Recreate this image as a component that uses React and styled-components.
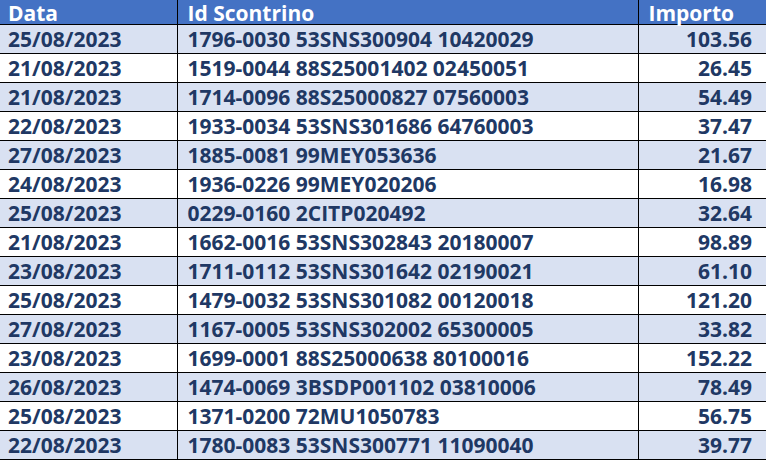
import styled, { createGlobalStyle } from "styled-components";

const GlobalStyle = createGlobalStyle`
  html, body {
    margin: 0;
    padding: 0;
    background: #ffffff;
    overflow: hidden;
  }
`;

const Table = styled.table`
  width: 766px;
  border-collapse: collapse;
  table-layout: fixed;
  font-family: "Open Sans", Lato, sans-serif;
  font-weight: 700;
  font-size: 21px;
`;

const HeadCell = styled.th`
  background: #4472c4;
  color: #ffffff;
  height: 24px;
  box-sizing: border-box;
  padding: 3px ${(props) => (props.$first ? "8px" : "10px")} 1px;
  text-align: left;
  vertical-align: bottom;
  line-height: 20px;
  font-weight: 700;
  border-bottom: 1px solid #000;
  border-left: ${(props) => (props.$first ? "none" : "1px solid #000")};
`;

const Row = styled.tr`
  background: ${(props) => (props.$shaded ? "#d9e1f2" : "#ffffff")};
`;

const Cell = styled.td`
  color: #203864;
  height: 28px;
  padding: 0 ${(props) => (props.$right ? "14px" : props.$first ? "8px" : "10px")};
  text-align: ${(props) => (props.$right ? "right" : "left")};
  vertical-align: bottom;
  line-height: 28px;
  white-space: nowrap;
  border-bottom: 1px solid #000;
  border-left: ${(props) => (props.$first ? "none" : "1px solid #000")};
`;

const rows = [
  ["25/08/2023", "1796-0030 53SNS300904 10420029", "103.56"],
  ["21/08/2023", "1519-0044 88S25001402 02450051", "26.45"],
  ["21/08/2023", "1714-0096 88S25000827 07560003", "54.49"],
  ["22/08/2023", "1933-0034 53SNS301686 64760003", "37.47"],
  ["27/08/2023", "1885-0081 99MEY053636", "21.67"],
  ["24/08/2023", "1936-0226 99MEY020206", "16.98"],
  ["25/08/2023", "0229-0160 2CITP020492", "32.64"],
  ["21/08/2023", "1662-0016 53SNS302843 20180007", "98.89"],
  ["23/08/2023", "1711-0112 53SNS301642 02190021", "61.10"],
  ["25/08/2023", "1479-0032 53SNS301082 00120018", "121.20"],
  ["27/08/2023", "1167-0005 53SNS302002 65300005", "33.82"],
  ["23/08/2023", "1699-0001 88S25000638 80100016", "152.22"],
  ["26/08/2023", "1474-0069 3BSDP001102 03810006", "78.49"],
  ["25/08/2023", "1371-0200 72MU1050783", "56.75"],
  ["22/08/2023", "1780-0083 53SNS300771 11090040", "39.77"],
];

const App = () => {
  return (
    <>
      <GlobalStyle />
      <Table>
        <colgroup>
          <col style={{ width: 177 }} />
          <col style={{ width: 461 }} />
          <col style={{ width: 128 }} />
        </colgroup>
        <thead>
          <tr>
            <HeadCell $first>Data</HeadCell>
            <HeadCell>Id Scontrino</HeadCell>
            <HeadCell>Importo</HeadCell>
          </tr>
        </thead>
        <tbody>
          {rows.map((r, i) => (
            <Row key={i} $shaded={i % 2 === 0}>
              <Cell $first>{r[0]}</Cell>
              <Cell>{r[1]}</Cell>
              <Cell $right>{r[2]}</Cell>
            </Row>
          ))}
        </tbody>
      </Table>
    </>
  );
};

export default App;
